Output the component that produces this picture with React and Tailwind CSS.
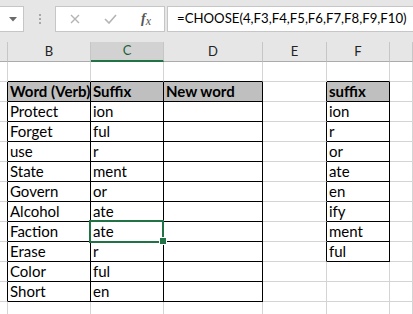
import React from "react";

const cols = [
  { key: "A", w: "w-[8px]" },
  { key: "B", w: "w-[83px]" },
  { key: "C", w: "w-[73px]" },
  { key: "D", w: "w-[99px]" },
  { key: "E", w: "w-[64px]" },
  { key: "F", w: "w-[63px]" },
  { key: "G", w: "flex-1" },
];

const main = [
  ["Protect", "ion"],
  ["Forget", "ful"],
  ["use", "r"],
  ["State", "ment"],
  ["Govern", "or"],
  ["Alcohol", "ate"],
  ["Faction", "ate"],
  ["Erase", "r"],
  ["Color", "ful"],
  ["Short", "en"],
];
const suf = ["ion", "r", "or", "ate", "en", "ify", "ment", "ful"];

function cellInfo(r, c) {
  const inMain = r >= 1 && r <= 11;
  const inSuf = r >= 1 && r <= 9;
  let right = false;
  let bottom = false;
  let fill = false;
  let bold = false;
  let text = "";
  if (c === "A" && inMain) right = true;
  if ((c === "B" || c === "C" || c === "D") && inMain) {
    right = true;
    bottom = true;
  }
  if ((c === "B" || c === "C" || c === "D") && r === 0) bottom = true;
  if ((c === "E" || c === "F") && inSuf) right = true;
  if (c === "F" && (inSuf || r === 0)) bottom = true;
  if (r === 1 && (c === "B" || c === "C" || c === "D" || c === "F")) {
    fill = true;
    bold = true;
  }
  if (r === 1) {
    if (c === "B") text = "Word (Verb)";
    if (c === "C") text = "Suffix";
    if (c === "D") text = "New word";
    if (c === "F") text = "suffix";
  }
  if (r >= 2 && r <= 11) {
    if (c === "B") text = main[r - 2][0];
    if (c === "C") text = main[r - 2][1];
  }
  if (r >= 2 && r <= 9 && c === "F") text = suf[r - 2];
  return { right, bottom, fill, bold, text };
}

function Row({ r }) {
  return (
    <div className="flex h-[20px]">
      {cols.map((col) => {
        const i = cellInfo(r, col.key);
        return (
          <div
            key={col.key}
            className={
              col.w +
              " shrink-0 h-[20px] border-r border-b pl-[2px] overflow-hidden whitespace-nowrap leading-[19px] text-[15px] text-black " +
              (i.right ? "border-r-black " : "border-r-[#d4d4d4] ") +
              (i.bottom ? "border-b-black " : "border-b-[#d4d4d4] ") +
              (i.fill ? "bg-[#bfbfbf] " : "bg-white ") +
              (i.bold ? "font-bold" : "")
            }
          >
            {i.text}
          </div>
        );
      })}
    </div>
  );
}

export default function App() {
  const headers = [
    { k: "", w: "w-[8px]" },
    { k: "B", w: "w-[83px]" },
    { k: "C", w: "w-[73px]", sel: true },
    { k: "D", w: "w-[99px]" },
    { k: "E", w: "w-[64px]" },
    { k: "F", w: "w-[63px]" },
    { k: "", w: "flex-1" },
  ];
  return (
    <div
      className="relative w-[413px] h-[314px] overflow-hidden bg-white"
      style={{ fontFamily: "Lato, 'Liberation Sans', sans-serif" }}
    >
      {/* formula bar */}
      <div className="h-[42px] bg-[#e6e6e6] flex items-start pt-[6px]">
        <div className="shrink-0 w-[24px] h-[26px] bg-white border border-l-0 border-[#c6c6c6] flex items-center justify-center pl-[2px]">
          <svg width="8" height="5" viewBox="0 0 8 5">
            <path d="M0 0 H8 L4 4.5 Z" fill="#6a6a6a" />
          </svg>
        </div>
        <div className="shrink-0 w-[31px] h-[26px] flex flex-col items-center justify-center gap-[2px]">
          <div className="w-[2px] h-[2px] bg-[#a8a8a8]" />
          <div className="w-[2px] h-[2px] bg-[#a8a8a8]" />
          <div className="w-[2px] h-[2px] bg-[#a8a8a8]" />
        </div>
        <div className="shrink-0 w-[110px] h-[26px] bg-white border border-[#c6c6c6] flex items-center">
          <div className="w-[36px] flex justify-center pl-[2px]">
            <svg width="10" height="10" viewBox="0 0 10 10">
              <path d="M1 1 L9 9 M9 1 L1 9" stroke="#b4b4b4" strokeWidth="1.4" />
            </svg>
          </div>
          <div className="w-[36px] flex justify-center">
            <svg width="13" height="10" viewBox="0 0 13 10">
              <path d="M1 5 L5 9 L12 1" stroke="#b4b4b4" strokeWidth="1.6" fill="none" />
            </svg>
          </div>
          <div
            className="w-[36px] flex justify-center italic text-[14px] text-[#555] leading-none"
            style={{ fontFamily: "'Liberation Serif', serif" }}
          >
            <span className="font-bold">f</span>
            <span className="text-[12px] mt-[3px]">x</span>
          </div>
        </div>
        <div className="ml-[2px] flex-1 min-w-0 overflow-hidden h-[26px] bg-white border border-r-0 border-[#c6c6c6] flex items-center pl-[9px] text-[13.2px] text-black whitespace-nowrap">
          =CHOOSE(4,F3,F4,F5,F6,F7,F8,F9,F10)
        </div>
      </div>
      {/* column headers */}
      <div className="flex h-[20px] bg-[#e6e6e6]">
        {headers.map((h, idx) => (
          <div
            key={idx}
            className={
              h.w +
              " shrink-0 h-[20px] flex items-center justify-center text-[13px] border-r border-r-[#c6c6c6] " +
              (h.sel
                ? "bg-[#d2d2d2] border-b-2 border-b-[#217346] text-[#1f5f3a]"
                : "border-b border-b-[#ababab] text-[#222]")
            }
          >
            {h.k}
          </div>
        ))}
      </div>
      {Array.from({ length: 13 }).map((_, r) => (
        <Row key={r} r={r} />
      ))}
      {/* selection */}
      <div className="absolute left-[89px] top-[220px] w-[75px] h-[23px] border-2 border-[#217346] pointer-events-none" />
      <div className="absolute left-[159px] top-[237px] w-[8px] h-[8px] bg-[#217346] border border-white" />
    </div>
  );
}
